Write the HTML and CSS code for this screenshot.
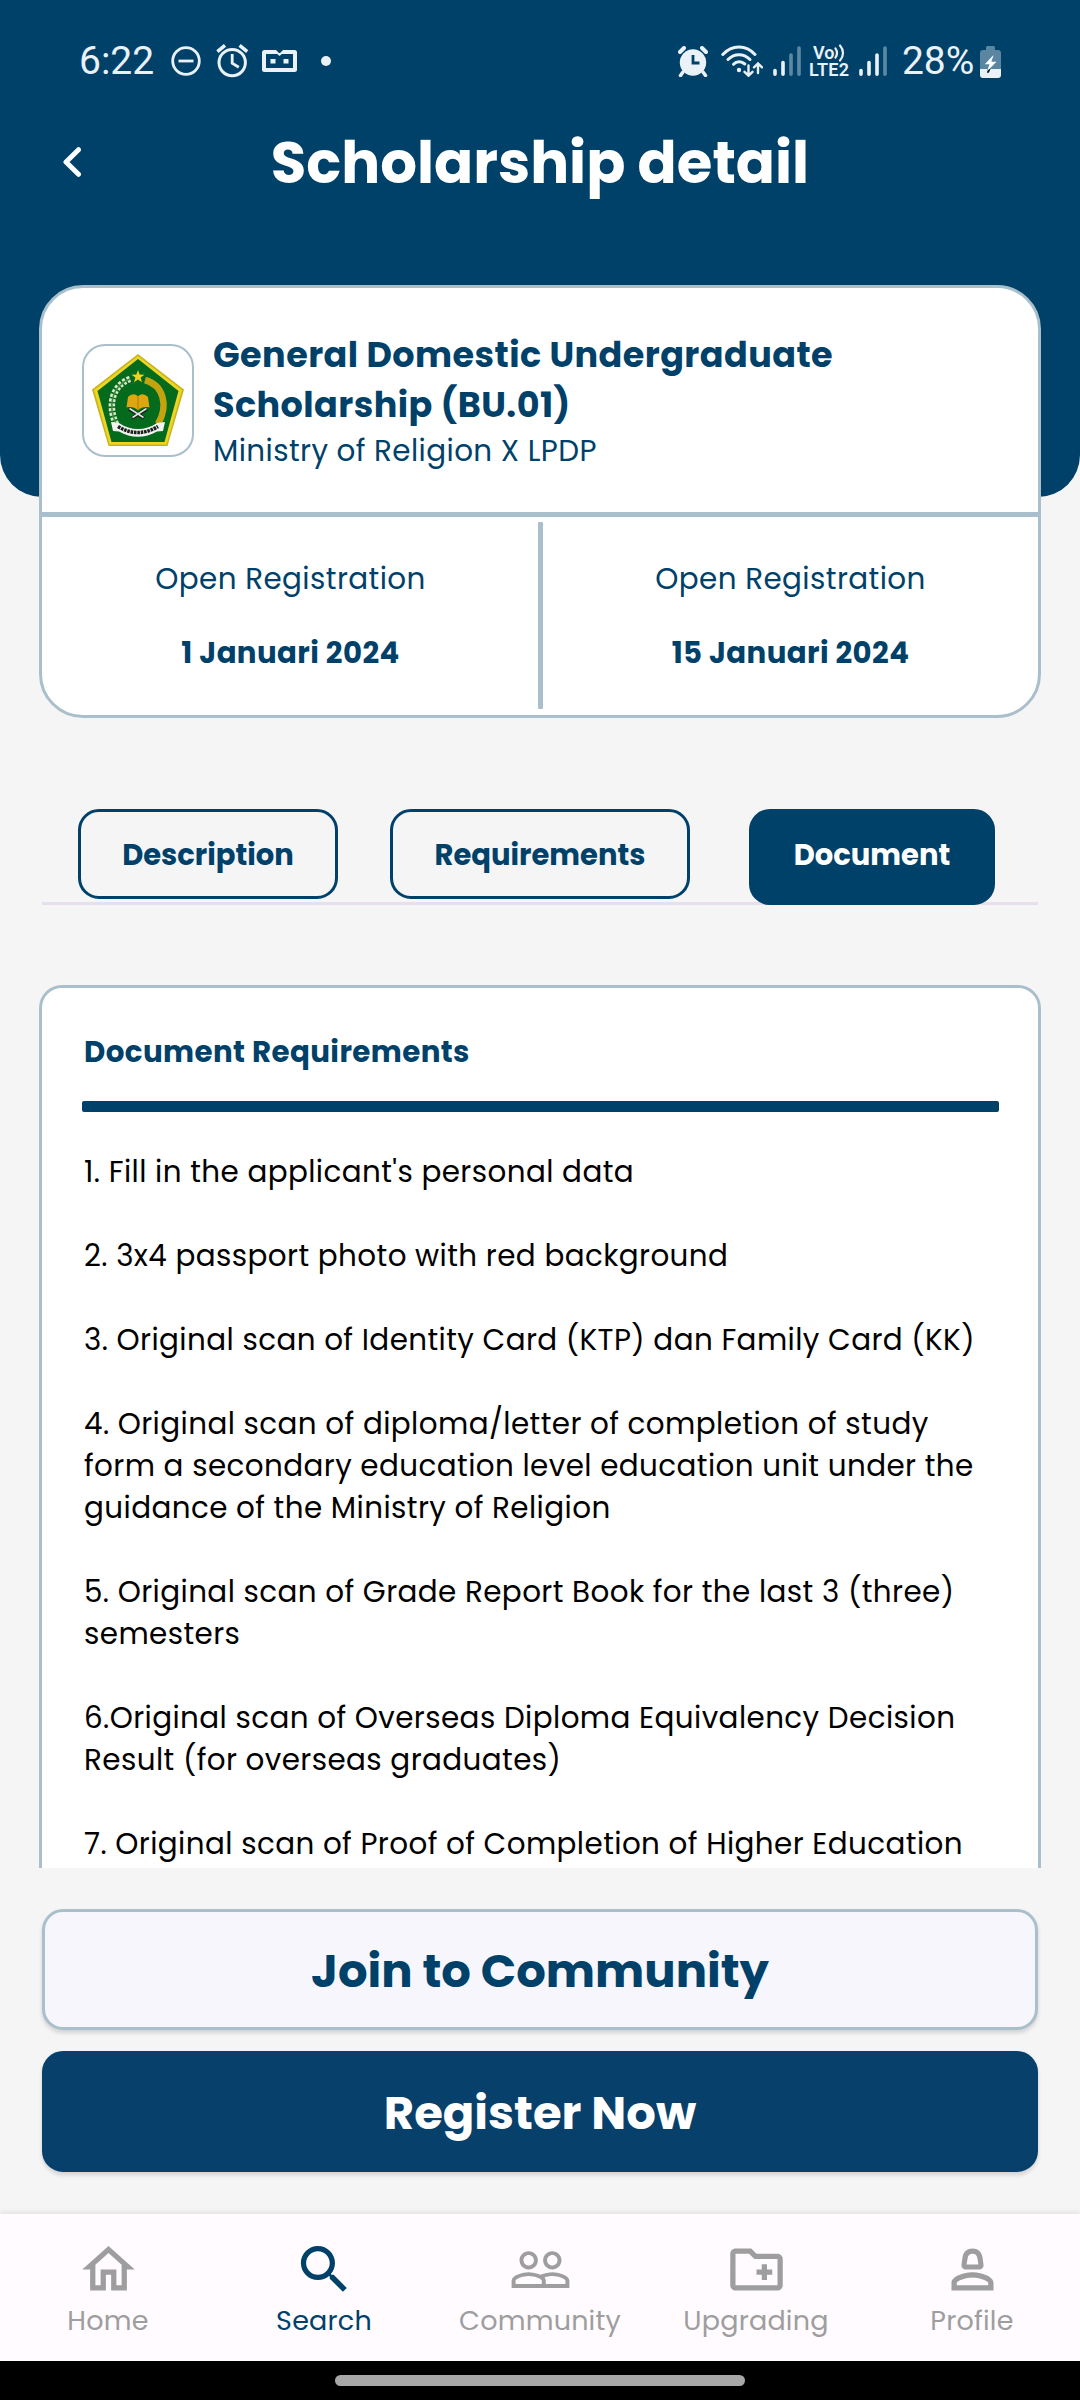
FILE: index.html
```html
<!DOCTYPE html>
<html lang="en">
<head>
  <meta charset="utf-8">
  <meta name="viewport" content="width=device-width, initial-scale=1">
  <title>Scholarship detail</title>
  <link rel="stylesheet" href="styles.css">
</head>
<body>
  <div class="screen">
    <header class="header">
      <div class="status">
        <div class="status-left">
          <span class="time">6:22</span>
          <svg class="st-dnd" width="30" height="30" viewBox="0 0 30 30" fill="none" stroke="#ebf2f7" stroke-width="2.8"><circle cx="15" cy="15" r="13.3"/><path d="M7.5 15h15"/></svg>
          <svg class="st-alarm" width="33" height="34" viewBox="0 0 33 34" fill="none" stroke="#ebf2f7"><circle cx="16.2" cy="18.6" r="13.2" stroke-width="3"/><path d="M16.2 10v9.3l6.6 4" stroke-width="2.8"/><path d="M1.4 7.6L9 1.4M23.6 1.4l7.6 6.2" stroke-width="3.6"/></svg>
          <svg class="st-bot" width="35" height="22" viewBox="0 0 35 22"><path d="M2.500 0H14l3.500 3.500L21 0h11.500A2.500 2.500 0 0 1 35 2.500v17a2.500 2.500 0 0 1-2.500 2.500h-30A2.500 2.500 0 0 1 0 19.500v-17A2.500 2.500 0 0 1 2.500 0zM4 4v14h27V4z" fill="#ebf2f7" fill-rule="evenodd"/><path d="M14 3h7l-3.500 3z" fill="#ebf2f7"/><path d="M8.500 9h5v4.500h-5zM21.500 9h5v4.500h-5z" fill="#ebf2f7"/></svg>
          <span class="st-dot"></span>
        </div>
        <div class="status-right">
          <svg width="30" height="31" viewBox="0 0 30 31"><circle cx="15" cy="16.500" r="13.200" fill="#ebf2f7"/><path d="M5 26l-2.500 3.500M25 26l2.500 3.500" stroke="#ebf2f7" stroke-width="3.500" stroke-linecap="round"/><path d="M2 6l4-4M28 6l-4-4" stroke="#ebf2f7" stroke-width="4" stroke-linecap="round"/><path d="M15 9v8h6.500" fill="none" stroke="#00416a" stroke-width="2.800"/></svg>
          <svg class="st-wifi" width="42" height="32" viewBox="0 0 42 32" fill="none" stroke="#ebf2f7" stroke-width="3" stroke-linecap="round"><path d="M1.800 9.500C11-.5 25-.5 34 9.500"/><path d="M7 14.500c6.500-6.300 15.500-6.300 22 0"/><path d="M12.500 19.300c3.200-3.200 8-3.200 11.300-.3"/><circle cx="18" cy="25" r="2.200" fill="#ebf2f7" stroke="none"/><path d="M27.500 20.500v10M23.500 26.800l4 3.900 4-3.900M37 28v-9.500M33 22.300l4-3.900 4 3.900" stroke-width="2.400"/></svg>
          <svg class="st-sig1" width="28" height="30" viewBox="0 0 28 30" stroke="#ebf2f7" stroke-width="3.600" stroke-linecap="round"><path d="M2 24.500v3.700M10 16.500v11.700"/><path d="M18 9v19.200M26 2v26.200" opacity=".4"/></svg>
          <div class="volte">
            <div class="vo"><span>Vo</span><svg width="11" height="18" viewBox="0 0 11 18" fill="none" stroke="#ebf2f7" stroke-width="2.200" stroke-linecap="round"><path d="M1.500 4.500c2 3 2 6 0 9M6 1.500c4 4.500 4 10.500 0 15"/></svg></div>
            <span>LTE2</span>
          </div>
          <svg class="st-sig2" width="28" height="30" viewBox="0 0 28 30" stroke="#ebf2f7" stroke-width="3.600" stroke-linecap="round"><path d="M2 24.500v3.700M10 16.500v11.700M18 9v19.200"/><path d="M26 2v26.200" opacity=".4"/></svg>
          <span class="battery-text">28%</span>
          <svg width="21" height="33" viewBox="0 0 21 33"><path d="M6 2.500A1.500 1.500 0 0 1 7.500 1h6A1.500 1.500 0 0 1 15 2.500V5h3a3 3 0 0 1 3 3v16H0V8a3 3 0 0 1 3-3h3z" fill="#5a86a2"/><path d="M0 24h21v6a3 3 0 0 1-3 3H3a3 3 0 0 1-3-3z" fill="#ebf2f7"/><path d="M7.500 24h3l-1.500 3.500-2 .5z" fill="#0b1a24"/><path d="M13 10.500L4.800 19.200h4.700L7 26.200l9.500-9.500h-5.200l2.200-6.200z" fill="#fff"/></svg>
        </div>
      </div>
      <div class="titlebar">
        <svg class="back" width="18" height="30" viewBox="0 0 18 30" fill="none" stroke="#fff" stroke-width="5" stroke-linecap="round" stroke-linejoin="round"><path d="M15.500 2.700L3 15l12.500 12.300"/></svg>
        <h1>Scholarship detail</h1>
      </div>
    </header>

    <main class="content">
      <section class="summary">
        <div class="summary-top">
          <div class="logo">
            <svg width="92" height="92" viewBox="0 0 92 92">
              <path d="M46 0L92 35.500 75.500 92h-59L0 35.500z" fill="#c9b21e"/>
              <path d="M46 2L90 36 74.500 90.500h-57L2 36z" fill="#ecd623"/>
              <path d="M46 5L86.500 37 72.500 88h-53L5.500 37z" fill="#046a1c"/>
              <path d="M38 25C21 31 15 50 24 70" fill="none" stroke="#d9e6c8" stroke-width="6.500" stroke-dasharray="3 1.600"/>
              <path d="M38 25C21 31 15 50 24 70" fill="none" stroke="#3b8a3a" stroke-width="1.500"/>
              <path d="M53 26c18 5 24 25 13 44" fill="none" stroke="#c3a30f" stroke-width="6.500"/>
              <path d="M46 16l1.600 4.600 4.900.1-3.900 2.900 1.400 4.700-4-2.800-4 2.800 1.400-4.700-3.900-2.900 4.900-.1z" fill="#f2d21f"/>
              <path d="M36 43c4-3.500 7-3.500 10-.5 3-3 6-3 10 .5l1.500 10.500c-4-1-8-.5-11.500 3-3.500-3.500-7.500-4-11.500-3z" fill="#dda70d"/>
              <path d="M46 43v13" stroke="#a97f08"/>
              <path d="M37 55l15 9M55 55l-15 9" stroke="#17251a" stroke-width="3.500"/>
              <path d="M37.500 54.500l14 9M54.500 54.500l-14 9" stroke="#dfe5e0" stroke-width="1.500"/>
              <path d="M19 68l8 1c12 8 26 8 38 0l8-1-2 9-6 .5c-12 7-26 7-38 0l-6-.5z" fill="#f1f3f1"/>
              <path d="M26 72.500c13 8 27 8 40 0" fill="none" stroke="#1c211d" stroke-width="3.500" stroke-dasharray="2.600 .8"/>
            </svg>
          </div>
          <div class="summary-text">
            <h2>General Domestic Undergraduate<br>Scholarship (BU.01)</h2>
            <p>Ministry of Religion X LPDP</p>
          </div>
        </div>
        <div class="dates">
          <div class="date"><span>Open Registration</span><strong>1 Januari 2024</strong></div>
          <div class="date-divider"></div>
          <div class="date"><span>Open Registration</span><strong>15 Januari 2024</strong></div>
        </div>
      </section>

      <nav class="tabs">
        <div class="tab tab-description">Description</div>
        <div class="tab tab-requirements">Requirements</div>
        <div class="tab tab-document active">Document</div>
      </nav>

      <section class="document">
        <h3>Document Requirements</h3>
        <div class="rule"></div>
        <div class="items">
          <p>1. Fill in the applicant's personal data</p>
          <p>2. 3x4 passport photo with red background</p>
          <p>3. Original scan of Identity Card (KTP) dan Family Card (KK)</p>
          <p>4. Original scan of diploma/letter of completion of study<br>form a secondary education level education unit under the<br>guidance of the Ministry of Religion</p>
          <p>5. Original scan of Grade Report Book for the last 3 (three)<br>semesters</p>
          <p>6.Original scan of Overseas Diploma Equivalency Decision<br>Result (for overseas graduates)</p>
          <p>7. Original scan of Proof of Completion of Higher Education</p>
        </div>
      </section>
    </main>

    <div class="actions">
      <button class="btn btn-light">Join to Community</button>
      <button class="btn btn-dark">Register Now</button>
    </div>

    <nav class="bottom-nav">
      <div class="nav-item">
        <svg viewBox="0 0 24 24"><path d="M12 5.690l5 4.500V18h-2v-6H9v6H7v-7.810l5-4.500M12 3L2 12h3v8h6v-6h2v6h6v-8h3L12 3z"/></svg>
        <span>Home</span>
      </div>
      <div class="nav-item selected">
        <svg viewBox="0 0 24 24"><path d="M15.500 14h-.79l-.28-.27C15.410 12.590 16 11.110 16 9.500 16 5.910 13.090 3 9.500 3S3 5.910 3 9.500 5.910 16 9.500 16c1.610 0 3.090-.59 4.230-1.570l.27.28v.79l5 4.990L20.490 19l-4.990-5zm-6 0C7.010 14 5 11.990 5 9.500S7.010 5 9.500 5 14 7.010 14 9.500 11.990 14 9.500 14z"/></svg>
        <span>Search</span>
      </div>
      <div class="nav-item">
        <svg viewBox="0 0 24 24"><path d="M16.500 13c-1.200 0-3.070.34-4.500 1-1.430-.67-3.300-1-4.500-1C5.330 13 1 14.080 1 16.250V19h22v-2.750c0-2.170-4.330-3.250-6.500-3.250zm-4 4.500h-10v-1.250c0-.54 2.560-1.750 5-1.750s5 1.210 5 1.750v1.250zm9 0H14v-1.250c0-.46-.2-.86-.52-1.220.88-.3 1.960-.53 3.020-.53 2.440 0 5 1.210 5 1.750v1.250zM7.500 12c1.930 0 3.500-1.570 3.500-3.500S9.430 5 7.500 5 4 6.570 4 8.500 5.570 12 7.500 12zm0-5.500c1.100 0 2 .9 2 2s-.9 2-2 2-2-.9-2-2 .9-2 2-2zm9 5.500c1.930 0 3.500-1.570 3.500-3.500S18.430 5 16.500 5 13 6.570 13 8.500s1.570 3.500 3.500 3.500zm0-5.500c1.100 0 2 .9 2 2s-.9 2-2 2-2-.9-2-2 .9-2 2-2z"/></svg>
        <span>Community</span>
      </div>
      <div class="nav-item">
        <svg viewBox="0 0 24 24"><path d="M20 6h-8l-2-2H4c-1.110 0-1.990.89-1.990 2L2 18c0 1.110.89 2 2 2h16c1.110 0 2-.89 2-2V8c0-1.110-.89-2-2-2zm0 12H4V6h5.170l2 2H20v10zm-8-4h2v2h2v-2h2v-2h-2v-2h-2v2h-2z"/></svg>
        <span>Upgrading</span>
      </div>
      <div class="nav-item">
        <svg viewBox="0 0 24 24"><path fill-rule="evenodd" d="M12 4c-2 0-3.500 1.300-3.800 3.300l-.4 2.900C7.700 11.200 8.400 12 9.400 12h5.200c1 0 1.700-.8 1.600-1.800l-.4-2.900C15.500 5.300 14 4 12 4zm0 2c1 0 1.700.6 1.850 1.600l.4 2.500h-4.500l.4-2.500C10.300 6.600 11 6 12 6zM12 13c-2.670 0-8 1.340-8 4v3h16v-3c0-2.660-5.330-4-8-4zm6 5H6v-1c.2-.7 3.300-2 6-2s5.800 1.290 6 2z"/></svg>
        <span>Profile</span>
      </div>
    </nav>
    <div class="gesture-bar"><div class="pill"></div></div>
  </div>
</body>
</html>
```
FILE: styles.css
```css
* { box-sizing: border-box; }

body {
  margin: 0;
  background: #f5f5f5;
  color: #00416a;
  font-family: Poppins, Inter, "Open Sans", sans-serif;
}

h1, h2, h3, p { margin: 0; }

svg { display: block; flex: none; }

.screen {
  display: flex;
  flex-direction: column;
  width: 1080px;
  height: 2400px;
  overflow: hidden;
}

/* Header */
.header {
  flex: none;
  height: 497px;
  background: #00416a;
  border-radius: 0 0 42px 42px;
}

.status {
  display: flex;
  justify-content: space-between;
  align-items: center;
  height: 119px;
  padding: 3px 79px 0;
  color: #ebf2f7;
  font-family: Roboto, sans-serif;
}

.status-left, .status-right { display: flex; align-items: center; }

.time { width: 92px; font-size: 39px; line-height: 46px; }
.st-alarm { margin-left: 15px; }
.st-bot { margin-left: 13px; }
.st-dot { width: 10px; height: 10px; margin-left: 24px; border-radius: 50%; background: #ebf2f7; }

.st-wifi { margin-left: 13px; }
.st-sig1 { margin-left: 10px; }
.volte {
  display: flex;
  flex-direction: column;
  width: 44px;
  margin-left: 8px;
  font-size: 18px;
  font-weight: 600;
  line-height: 17px;
  letter-spacing: 0.3px;
}
.vo { display: flex; align-items: center; height: 16px; padding-left: 4px; letter-spacing: 0; }
.st-sig2 { margin-left: 6px; }
.battery-text { width: 78px; margin-left: 15px; font-size: 39px; line-height: 46px; letter-spacing: -0.1px; }

.titlebar {
  display: grid;
  grid-template-columns: 90px 1fr 90px;
  align-items: center;
  height: 87px;
}
.back { justify-self: end; margin: 0 9px 2px 0; }
.titlebar h1 {
  color: #fff;
  font-size: 57.75px;
  font-weight: 700;
  line-height: 87px;
  text-align: center;
}

/* Scrolling content */
.content {
  flex: none;
  height: 1583px;
  margin-top: -212px;
  padding: 0 39px;
  overflow: hidden;
}

.summary {
  height: 433px;
  border: 3px solid #a9bfcc;
  border-radius: 44px;
  background: #fff;
}
.summary-top {
  display: flex;
  align-items: center;
  gap: 19px;
  height: 229px;
  padding-left: 40px;
  border-bottom: 5px solid #a9bfcc;
}
.logo {
  display: flex;
  align-items: center;
  justify-content: center;
  width: 112px;
  height: 113px;
  border: 2px solid #a9bfcc;
  border-radius: 23px;
}
.summary-text { padding-top: 1px; }
.summary-text h2 {
  font-size: 35px;
  font-weight: 700;
  line-height: 50px;
  letter-spacing: 0.44px;
}
.summary-text p {
  font-size: 29.4px;
  line-height: 42px;
  letter-spacing: 0.4px;
}

.dates { display: flex; height: 198px; }
.date {
  display: flex;
  flex: 1;
  flex-direction: column;
  align-items: center;
  gap: 32px;
  padding-top: 41px;
  font-size: 29.4px;
  line-height: 42px;
  letter-spacing: 0.42px;
}
.date:first-child { padding-left: 1px; }
.date strong { font-size: 29.2px; }
.date-divider { width: 5px; margin: 5px 0 6px; border-radius: 1px; background: #a9bfcc; }

/* Tabs */
.tabs {
  display: flex;
  align-items: flex-start;
  height: 96px;
  margin: 91px 3px 0;
  padding-left: 36px;
  border-bottom: 3px solid #e7e0ec;
}
.tab {
  height: 90px;
  padding-top: 22px;
  border: 3px solid #00416a;
  border-radius: 21px;
  font-size: 29px;
  font-weight: 700;
  line-height: 42px;
  text-align: center;
}
.tab-description { width: 260px; }
.tab-requirements { width: 300px; margin-left: 52px; }
.tab-document { width: 246px; margin-left: 59px; }
.tab.active { height: 96px; background: #00416a; color: #fff; }

/* Document card */
.document {
  height: 920px;
  margin-top: 80px;
  padding: 43px 41px 0;
  border: 3px solid #a9bfcc;
  border-radius: 23px;
  background: #fff;
}
.document h3 {
  padding-left: 1px;
  font-size: 29.3px;
  font-weight: 700;
  line-height: 42px;
  letter-spacing: 0.4px;
}
.rule { height: 10.5px; margin: 28px -1.5px 39px; border-radius: 2px; background: #00416a; }
.items { display: flex; flex-direction: column; gap: 42px; }
.items p {
  padding-left: 1px;
  color: #000;
  font-size: 29.4px;
  line-height: 42px;
  letter-spacing: 0.41px;
  white-space: nowrap;
}

/* Call-to-action buttons */
.actions {
  display: flex;
  flex: none;
  flex-direction: column;
  gap: 21px;
  height: 346px;
  padding: 41px 42px 0;
}
.btn {
  height: 121px;
  padding: 1px 0 0;
  border: 3px solid #a9bfcc;
  border-radius: 21px;
  font-family: inherit;
  font-size: 46.5px;
  font-weight: 700;
  line-height: 67px;
  box-shadow: 0 3px 4px rgba(0, 0, 0, 0.14);
}
.btn-light { background: #f6f6fc; color: #00416a; }
.btn-dark { border-color: #06406b; background: #06406b; color: #fff; }

/* Bottom navigation */
.bottom-nav {
  display: flex;
  flex: none;
  height: 147px;
  padding-top: 24px;
  background: #fffbff;
  box-shadow: 0 -1px 6px rgba(0, 0, 0, 0.1);
}
.nav-item {
  display: flex;
  flex: 1;
  flex-direction: column;
  align-items: center;
  color: #9e9e9e;
  font-size: 27px;
  line-height: 39px;
  letter-spacing: 0.2px;
}
.nav-item svg { width: 63px; height: 63px; fill: currentColor; }
.nav-item.selected { color: #00416a; }

.gesture-bar {
  display: flex;
  flex: none;
  justify-content: center;
  height: 39px;
  padding-top: 14px;
  background: #000;
}
.pill { width: 410px; height: 11px; border-radius: 6px; background: #a8a8a8; }
```
